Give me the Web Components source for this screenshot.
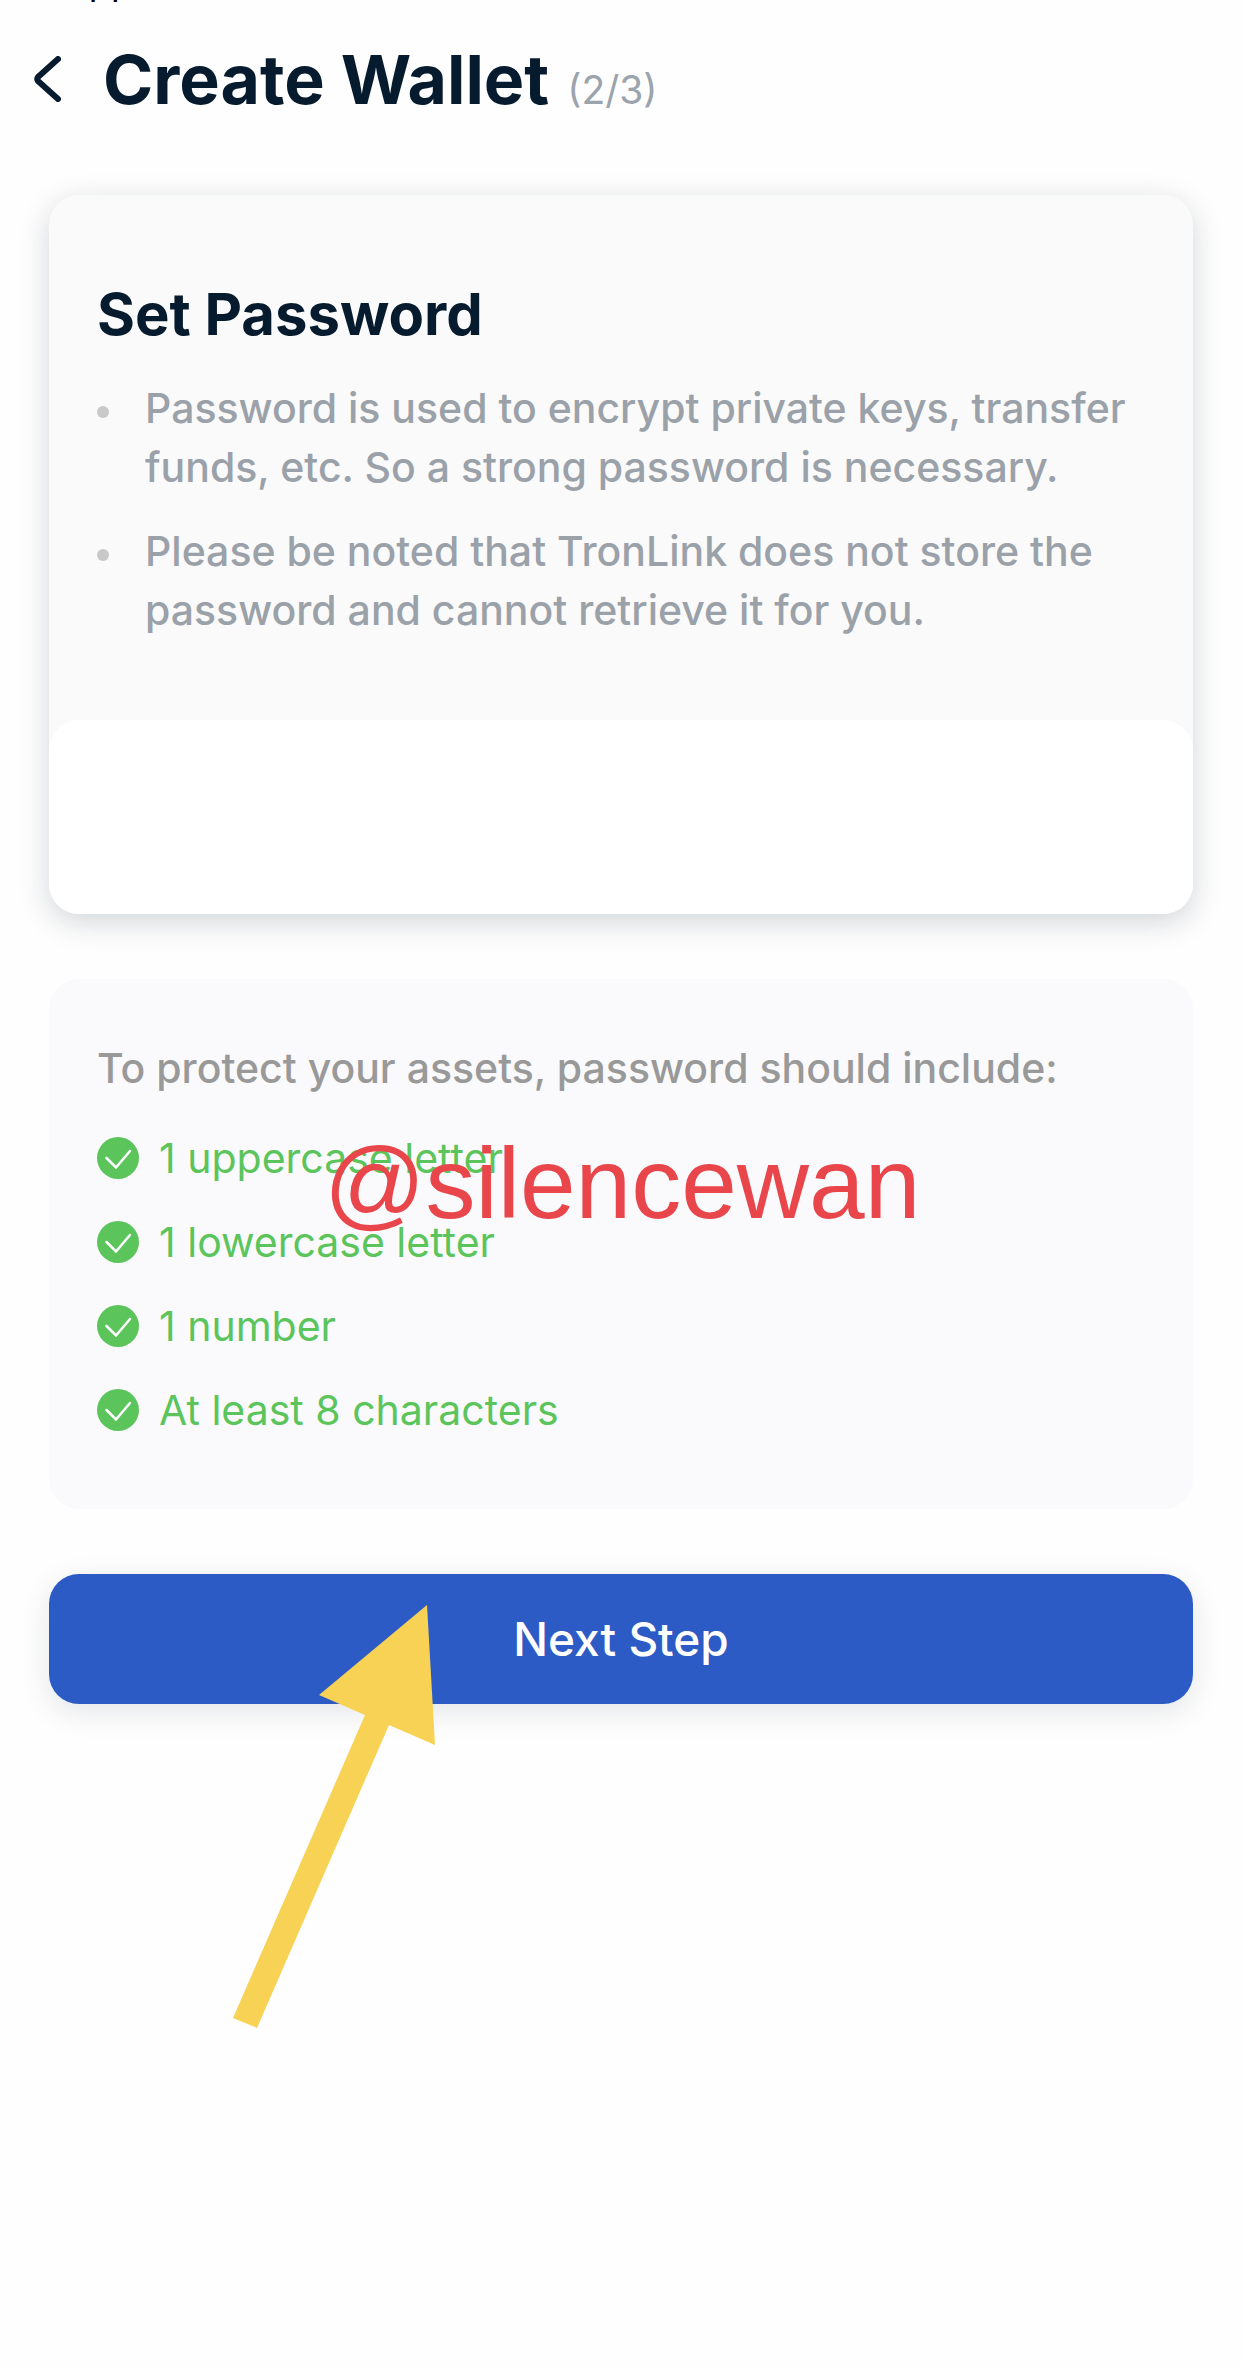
<!DOCTYPE html>
<html lang="en">
<head>
    <meta charset="UTF-8">
    <meta name="viewport" content="width=device-width, initial-scale=1">
    <title>Create Wallet</title>
    <style>
        body {
            margin: 0;
            min-height: 100vh;
            background: #fefefe;
            color: #071b2f;
            font-family: Inter, "Liberation Sans", sans-serif;
        }
        main {
            display: flex;
            flex-direction: column;
            gap: 65px;
            padding: 72px 49px 49px;
        }
    </style>
</head>
<body>

<template id="status-template">
    <style>
        :host {
            display: block;
            height: 2px;
            padding-left: 64px;
            overflow: hidden;
            color: #000;
        }
        span {
            display: block;
            font-size: 36px;
            line-height: 44px;
            margin-top: -38px;
        }
    </style>
    <span><slot></slot></span>
</template>

<template id="header-template">
    <style>
        :host {
            display: flex;
            align-items: center;
            box-sizing: border-box;
            height: 121px;
            padding: 33px 33px 0;
        }
        button {
            display: flex;
            margin: 0 42px 0 0;
            padding: 0;
            border: 0;
            background: none;
            color: inherit;
        }
        .titles {
            display: flex;
            align-items: baseline;
            gap: 18px;
        }
        h1 {
            margin: 0;
            font-size: 68px;
            line-height: 80px;
            font-weight: 700;
        }
        .step {
            font-size: 39px;
            color: #9ba3ad;
        }
    </style>
    <button type="button" aria-label="Back">
        <svg width="28" height="46" viewBox="0 0 28 46" fill="none" stroke="currentColor" stroke-width="6" stroke-linecap="round" stroke-linejoin="round">
            <path d="M25 3 5 21Q3.500 23 5 25L25 43"/>
        </svg>
    </button>
    <div class="titles">
        <h1><slot></slot></h1>
        <span class="step"><slot name="step"></slot></span>
    </div>
</template>

<template id="card-template">
    <style>
        :host {
            display: block;
            border-radius: 30px;
            background: #fafafa;
            box-shadow: 0 8px 30px rgba(7, 27, 47, .18);
        }
        .info { padding: 82px 48px 80px; }
        h2 {
            margin: 0 0 28px;
            font-size: 58px;
            line-height: 74px;
            font-weight: 700;
        }
        .notes {
            display: flex;
            flex-direction: column;
            gap: 25px;
        }
        input {
            display: block;
            box-sizing: border-box;
            width: 100%;
            height: 194px;
            padding: 0 48px;
            border: 0;
            border-radius: 30px;
            outline: 0;
            background: #fff;
            color: inherit;
            font: inherit;
            font-size: 41px;
        }
    </style>
    <div class="info">
        <h2><slot name="title"></slot></h2>
        <div class="notes" role="list"><slot></slot></div>
    </div>
    <input type="password" aria-label="Password">
</template>

<template id="note-template">
    <style>
        :host {
            display: flex;
            align-items: flex-start;
            gap: 36px;
            font-size: 41px;
            font-weight: 500;
            line-height: 59px;
            color: #9aa1a9;
        }
        i {
            flex: none;
            width: 12px;
            height: 12px;
            margin-top: 27px;
            border-radius: 50%;
            background: #c8c8c8;
        }
    </style>
    <i></i>
    <span><slot></slot></span>
</template>

<template id="rules-template">
    <style>
        :host {
            display: block;
            position: relative;
            padding: 60px 48px 57px;
            border-radius: 30px;
            background: #fafafc;
        }
        p {
            margin: 0 0 18px;
            font-size: 41px;
            font-weight: 500;
            line-height: 59px;
            color: #999;
        }
        .mark {
            position: absolute;
            left: 275px;
            top: 149px;
            font-family: "Liberation Sans", Arial, sans-serif;
            font-size: 100px;
            line-height: 110px;
            color: #e9464b;
        }
    </style>
    <p><slot name="title"></slot></p>
    <slot></slot>
    <span class="mark"><slot name="mark"></slot></span>
</template>

<template id="rule-template">
    <style>
        :host {
            display: flex;
            align-items: center;
            gap: 20px;
            height: 84px;
            font-size: 41px;
            color: #5bc55c;
        }
        svg { flex: none; }
    </style>
    <svg width="42" height="42" viewBox="0 0 42 42" fill="none">
        <circle cx="21" cy="21" r="21" fill="currentColor"/>
        <path d="M9.500 21 19 30.500 33 14" stroke="#fff" stroke-width="2.500" stroke-linecap="round"/>
    </svg>
    <span><slot></slot></span>
</template>

<template id="button-template">
    <style>
        :host {
            display: block;
            position: relative;
        }
        button {
            display: block;
            width: 100%;
            height: 130px;
            padding: 0;
            border: 0;
            border-radius: 30px;
            background: #2d5bc5;
            box-shadow: 0 8px 30px rgba(7, 27, 47, .11);
            color: #fff;
            font: inherit;
            font-size: 46px;
            font-weight: 500;
        }
        svg {
            position: absolute;
            left: 184px;
            top: 31px;
            pointer-events: none;
        }
    </style>
    <button type="button"><slot></slot></button>
    <svg width="202" height="424" viewBox="0 0 202 424" aria-hidden="true">
        <path fill="#f8d254" d="M194 0 86 90 132 110 0 413 24 423 156 120 202 140Z"/>
    </svg>
</template>

<status-strip>App Store</status-strip>
<page-header>Create Wallet<span slot="step">(2/3)</span></page-header>
<main>
    <password-card>
        <span slot="title">Set Password</span>
        <note-item role="listitem">Password is used to encrypt private keys, transfer funds, etc. So a strong password is necessary.</note-item>
        <note-item role="listitem">Please be noted that TronLink does not store the password and cannot retrieve it for you.</note-item>
    </password-card>
    <rules-panel>
        <span slot="title">To protect your assets, password should include:</span>
        <rule-item>1 uppercase letter</rule-item>
        <rule-item>1 lowercase letter</rule-item>
        <rule-item>1 number</rule-item>
        <rule-item>At least 8 characters</rule-item>
        <span slot="mark">@silencewan</span>
    </rules-panel>
    <step-button>Next Step</step-button>
</main>

<script>
    function define(name, templateId) {
        customElements.define(name,
            class extends HTMLElement {
                constructor() {
                    super();
                    const template = document
                        .getElementById(templateId)
                        .content;
                    this.attachShadow({mode: 'open'})
                        .appendChild(template.cloneNode(true));
                }
            })
    }

    define('status-strip', 'status-template');
    define('page-header', 'header-template');
    define('note-item', 'note-template');
    define('password-card', 'card-template');
    define('rule-item', 'rule-template');
    define('rules-panel', 'rules-template');
    define('step-button', 'button-template');
</script>
</body>
</html>
